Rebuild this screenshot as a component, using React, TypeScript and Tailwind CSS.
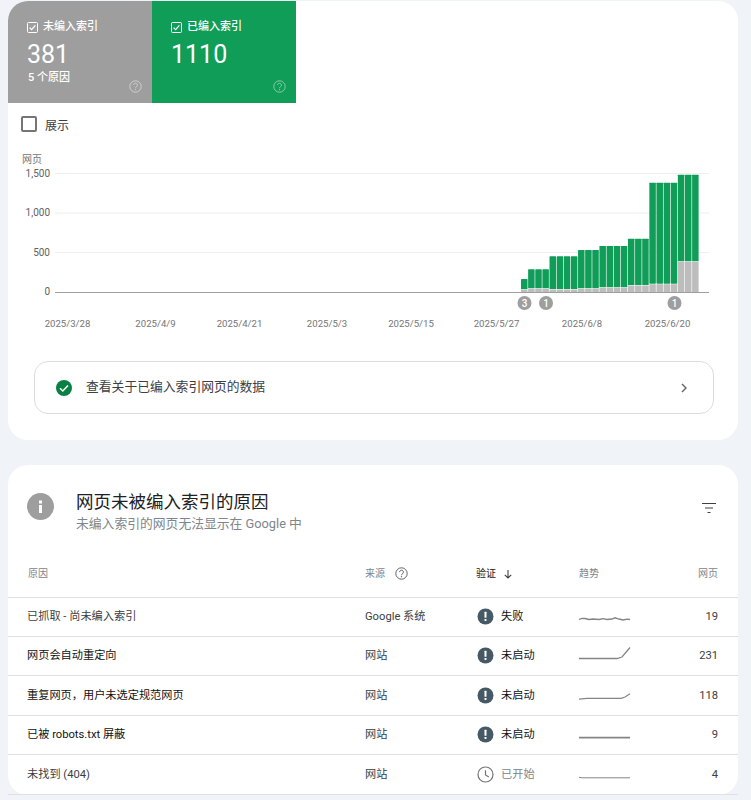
import React from "react";

const bars: [number, number, number][] = [
  [1, 279, 289.3],
  [3, 269.3, 288.3],
  [4, 256.3, 289],
  [3, 250, 288.3],
  [4, 246, 287.3],
  [3, 238.7, 285],
  [4, 182.7, 283.7],
  [3, 174.7, 261.3],
];

function Bars() {
  const out: React.ReactNode[] = [];
  let i = 0;
  bars.forEach(([n, top, mid]) => {
    for (let k = 0; k < n; k++) {
      const x = 521 + i * 7.13;
      out.push(
        <g key={i}>
          <rect x={x} y={top} width={6.5} height={mid - top} fill="#0f9d58" rx={0.6} />
          <rect x={x} y={mid + 0.5} width={6.5} height={292 - mid - 0.5} fill="#bdbdbd" />
        </g>
      );
      i++;
    }
  });
  return <>{out}</>;
}

function Chart() {
  const dates: [number, string][] = [
    [67.5, "2025/3/28"], [155.5, "2025/4/9"], [239.5, "2025/4/21"], [327, "2025/5/3"],
    [411, "2025/5/15"], [496.5, "2025/5/27"], [582, "2025/6/8"], [667.5, "2025/6/20"],
  ];
  const ys: [number, string][] = [[173.5, "1,500"], [213, "1,000"], [252.5, "500"], [292, "0"]];
  const badges: [number, string][] = [[524.5, "3"], [546, "1"], [674.5, "1"]];
  return (
    <svg width="730" height="200" viewBox="8 132 730 200" className="block">
      <text x="22" y="163" fontSize="10" fill="#757575">网页</text>
      {ys.map(([y, l]) => (
        <g key={l}>
          <text x="50" y={y + 3} fontSize="10" textAnchor="end" fill="#616161">{l}</text>
          {y !== 292 && <line x1="55" x2="709" y1={y} y2={y} stroke="#eeeeee" strokeWidth="1" />}
        </g>
      ))}
      <Bars />
      <line x1="55" x2="709" y1="292.5" y2="292.5" stroke="#9e9e9e" strokeWidth="1" />
      {badges.map(([x, l], i) => (
        <g key={i}>
          <circle cx={x} cy="303" r="7" fill="#9e9e9e" />
          <text x={x} y="306.5" fontSize="10" fontWeight="500" textAnchor="middle" fill="#fff">{l}</text>
        </g>
      ))}
      {dates.map(([x, l]) => (
        <text key={l} x={x} y="326.5" fontSize="9.6" textAnchor="middle" fill="#757575">{l}</text>
      ))}
    </svg>
  );
}

function TileCheck() {
  return (
    <svg width="11" height="11" viewBox="0 0 11 11" className="shrink-0">
      <rect x="0.5" y="0.5" width="10" height="10" rx="1" fill="none" stroke="#fff" />
      <path d="M2.6 5.6 4.6 7.6 8.4 3.4" fill="none" stroke="#fff" strokeWidth="1.3" />
    </svg>
  );
}

function Help({ className, stroke }: { className?: string; stroke: string }) {
  return (
    <svg width="13" height="13" viewBox="0 0 13 13" className={className}>
      <circle cx="6.5" cy="6.5" r="5.7" fill="none" stroke={stroke} strokeWidth="1" />
      <path d="M4.6 5.1a1.9 1.9 0 1 1 3 1.5c-.7.5-1.1.8-1.1 1.6" fill="none" stroke={stroke} strokeWidth="1" />
      <circle cx="6.5" cy="9.7" r="0.65" fill={stroke} />
    </svg>
  );
}

function Tile({ bg, label, value, sub, helpColor }: { bg: string; label: string; value: string; sub?: string; helpColor: string }) {
  return (
    <div className={`relative w-[144px] h-[102px] pl-[19px] pt-[19px] text-white ${bg}`}>
      <div className="flex items-center gap-[5px] text-[11px] leading-[14px] font-medium">
        <TileCheck />
        <span>{label}</span>
      </div>
      <div className="mt-[6px] text-[25px] leading-[30px]">{value}</div>
      {sub && <div className="mt-[1px] pl-[1px] text-[11px] font-medium leading-[14px]">{sub}</div>}
      <Help className="absolute right-[10px] bottom-[10px]" stroke={helpColor} />
    </div>
  );
}

const ExclaimIcon = () => (
  <svg width="17" height="17" viewBox="0 0 17 17" className="-mt-[1px] shrink-0">
    <circle cx="8.5" cy="8.5" r="8" fill="#455a64" />
    <rect x="7.5" y="3.8" width="2" height="6" rx="0.4" fill="#fff" />
    <rect x="7.5" y="11" width="2" height="2" rx="0.4" fill="#fff" />
  </svg>
);

const ClockIcon = () => (
  <svg width="17" height="17" viewBox="0 0 17 17" className="-mt-[1px] shrink-0">
    <circle cx="8.5" cy="8.5" r="7.5" fill="none" stroke="#757575" strokeWidth="1.2" />
    <path d="M8.5 4.2V9l3.4 2" fill="none" stroke="#757575" strokeWidth="1.2" />
  </svg>
);

function Spark({ d, w = 1.3 }: { d: string; w?: number }) {
  return (
    <svg width="52" height="20" viewBox="0 0 52 20" className="block">
      <path d={d} fill="none" stroke="#858585" strokeWidth={w} />
    </svg>
  );
}

const rows = [
  { name: "已抓取 - 尚未编入索引", src: "Google 系统", status: "失败", n: "19", h: "h-[39px]", strong: false, icon: "x", d: "M0 12.5 3 11.5 6 11.5 10 12.5 14 12 20 12.5 24 11.7 28 12.5 33 12 36 10.8 40 12 44 13 48 12.2 51 12.5" },
  { name: "网页会自动重定向", src: "网站", status: "未启动", n: "231", h: "h-[39px]", strong: true, icon: "x", d: "M0 12.5H38L43 11 51 1.5" },
  { name: "重复网页，用户未选定规范网页", src: "网站", status: "未启动", n: "118", h: "h-[40px]", strong: true, icon: "x", d: "M0 13.2 8 12.3H42L46 11 51 7.8" },
  { name: "已被 robots.txt 屏蔽", src: "网站", status: "未启动", n: "9", h: "h-[39px]", strong: true, icon: "x", w: 1.8, d: "M0 12.7H51" },
  { name: "未找到 (404)", src: "网站", status: "已开始", n: "4", h: "h-[40px]", strong: false, icon: "c", w: 1, d: "M0 12.3 3 12.8H51" },
];

export default function App() {
  return (
    <div className="h-[800px] w-[751px] overflow-hidden bg-[#f0f4f9] pl-[8px] pr-[13px] pt-px [font-family:Roboto,'Noto_Sans_CJK_SC',sans-serif] text-[#202124]">
      <div className="h-[439px] overflow-hidden rounded-[20px] bg-white">
        <div className="flex">
          <Tile bg="bg-[#9e9e9e]" label="未编入索引" value="381" sub="5 个原因" helpColor="#cfcfcf" />
          <Tile bg="bg-[#0f9d58]" label="已编入索引" value="1110" helpColor="#87ceab" />
        </div>
        <div className="flex h-[29px] items-center pl-[13px] pt-[13px]">
          <div className="h-[16px] w-[16px] rounded-[2px] border-2 border-[#757575]" />
          <span className="ml-[8px] mt-[3px] text-[12px] leading-[16px] text-[#3c4043]">展示</span>
        </div>
        <Chart />
        <div className="ml-[26px] mr-[24px] mt-[29px] flex h-[53px] items-center rounded-[14px] border border-[#dadce0] pl-[21px] pr-[24px]">
          <svg width="16" height="16" viewBox="0 0 16 16" className="shrink-0">
            <circle cx="8" cy="8" r="8" fill="#0b8043" />
            <path d="M4 8.3 6.8 11 12 5.6" fill="none" stroke="#fff" strokeWidth="1.5" />
          </svg>
          <span className="-mt-[2px] ml-[14px] flex-1 text-[12.8px] leading-[16px] text-[#3c4043]">查看关于已编入索引网页的数据</span>
          <svg width="10" height="12" viewBox="0 0 10 12">
            <path d="M3 2 7 6 3 10" fill="none" stroke="#5f6368" strokeWidth="1.4" />
          </svg>
        </div>
      </div>

      <div className="mt-[25px] rounded-[20px] bg-white">
        <div className="relative flex h-[84px] items-start pl-[19px] pt-[26px]">
          <svg width="27" height="27" viewBox="0 0 27 27" className="mt-[2px] shrink-0">
            <circle cx="13.5" cy="13.5" r="13.5" fill="#9e9e9e" />
            <rect x="12" y="12" width="3" height="8" fill="#fff" />
            <rect x="12" y="7.5" width="3" height="3" fill="#fff" />
          </svg>
          <div className="-mt-[1px] ml-[22px]">
            <div className="text-[17.5px] leading-[24px] text-[#202124]">网页未被编入索引的原因</div>
            <div className="mt-[2px] text-[12.8px] leading-[16px] text-[#80868b]">未编入索引的网页无法显示在 Google 中</div>
          </div>
          <svg width="16" height="12" viewBox="0 0 16 12" className="absolute right-[21px] top-[37px]">
            <path d="M1 1.5H15M4 6H12M6.5 10.5H9.5" stroke="#3c4043" strokeWidth="1" fill="none" />
          </svg>
        </div>

        <div className="flex h-[49px] items-center border-b border-[#e0e0e0] pl-[20px] pr-[20px] pt-[1px] text-[10px] text-[#80868b]">
          <div className="w-[337px]">原因</div>
          <div className="flex w-[111px] items-center gap-[10px]">
            <span>来源</span>
            <Help stroke="#5f6368" />
          </div>
          <div className="flex w-[103px] items-center gap-[7px] text-[#202124]">
            <span>验证</span>
            <svg width="10" height="10" viewBox="0 0 10 10">
              <path d="M5 1V9M1.8 5.8 5 9 8.2 5.8" fill="none" stroke="#3c4043" strokeWidth="1.1" />
            </svg>
          </div>
          <div className="flex-1">趋势</div>
          <div>网页</div>
        </div>

        {rows.map((r) => (
          <div key={r.name} className={`flex ${r.h} items-center border-b border-[#e0e0e0] pl-[19px] pr-[20px] text-[11.2px] leading-[14px]`}>
            <div className={`w-[338px] ${r.strong ? "text-[#111111]" : "text-[#3c4043]"}`}>{r.name}</div>
            <div className="w-[111px] text-[#3c4043]">{r.src}</div>
            <div className="flex w-[103px] items-center gap-[7px] pl-[1px]">
              {r.icon === "x" ? <ExclaimIcon /> : <ClockIcon />}
              <span className={r.icon === "x" ? "text-[#111111]" : "text-[#80868b]"}>{r.status}</span>
            </div>
            <div className="flex-1">
              <Spark d={r.d} w={r.w} />
            </div>
            <div className="text-[#3c4043]">{r.n}</div>
          </div>
        ))}
      </div>
    </div>
  );
}
